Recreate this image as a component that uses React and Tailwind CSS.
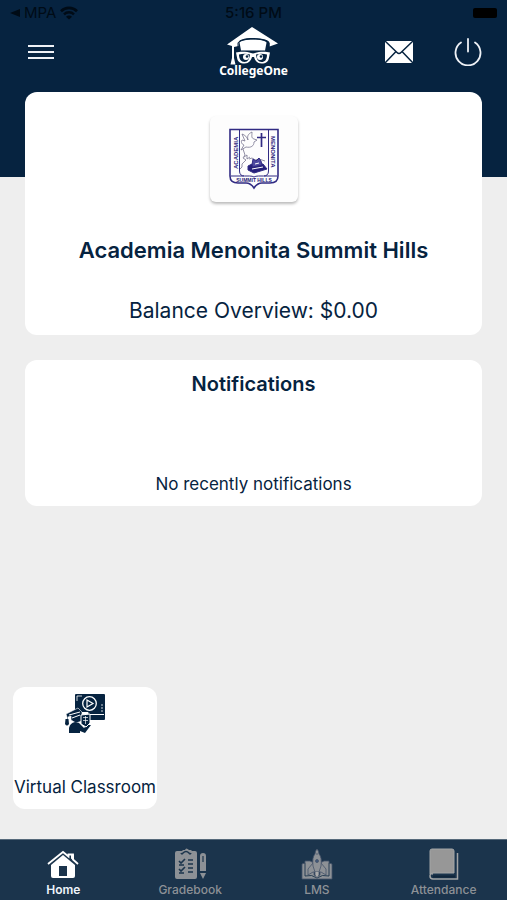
import React from "react";

const tabs = [
  { label: "Home", icon: HomeIcon, active: true },
  { label: "Gradebook", icon: GradebookIcon },
  { label: "LMS", icon: LmsIcon },
  { label: "Attendance", icon: BookIcon },
];

function WifiIcon() {
  return (
    <svg width="18" height="14" viewBox="0 0 18 14" fill="none" stroke="#000b16">
      <path d="M1 5.2a11.4 11.4 0 0 1 16 0" strokeWidth="2.6" />
      <path d="M4 8.3a7.2 7.2 0 0 1 10 0" strokeWidth="2.4" />
      <path d="M9 13.6 6 10.7a4.2 4.2 0 0 1 6 0z" fill="#000b16" stroke="none" />
    </svg>
  );
}

function MenuIcon() {
  return (
    <svg width="28" height="16" viewBox="0 0 28 16" stroke="#eef1f6" strokeWidth="2">
      <path d="M1 2h26M1 8h26M1 14h26" />
    </svg>
  );
}

function CapLogo() {
  return (
    <svg width="54" height="38" viewBox="0 0 54 38">
      <path d="M26 0 52 16.5 43.5 19.5V16c0-3-7-5-16.500-5S12.500 13 12.500 16v3L8 20v11h-2V19L1 17.500z" fill="#fff" />
      <path d="M13.500 15.500c3-4 24-4 27 0l-1.500 8h-24z" fill="#fff" />
      <path d="M12 21.500v-5.500c2-5.500 28-5.500 31 0v4" fill="none" stroke="#062340" strokeWidth="1" />
      <path d="M15.500 24.500h23" stroke="#062340" strokeWidth="1.200" />
      <path d="M6 19h2v12l1.500 6.500h-5L6 31z" fill="#fff" />
      <path d="M10 25.500c4-1 11-1 15 .5 1 .5 3 .5 4 0 4-1.500 11-1.500 15-.5l-1 5c-.5 4-3 6-7.500 6s-6.500-3-7.500-6.500h-2c-1 3.500-3 6.500-7.500 6.500s-7-2-7.500-6z" fill="#fff" />
      <path d="M13 27.500c3.500-1 8-1 11 0-.5 4-2 7.500-5.500 7.500S13 32 13 27.500zM30 27.500c3-1 7.500-1 11 0 0 5-2 7.500-5.500 7.500S30.500 32 30 27.500z" fill="#062340" />
      <circle cx="20" cy="30" r="3" fill="#fff" />
      <circle cx="34" cy="30" r="3" fill="#fff" />
      <circle cx="21" cy="29.500" r="1.300" fill="#062340" />
      <circle cx="35" cy="29.500" r="1.300" fill="#062340" />
    </svg>
  );
}

function MailIcon() {
  return (
    <svg width="30" height="24" viewBox="0 0 30 24">
      <rect x="1" y="1" width="28" height="22" rx="1" fill="#fff" />
      <path d="m1 1 12 11.500c1.200 1.200 2.800 1.200 4 0L29 1M1 23l11-11.500M29 23 18 11.500" fill="none" stroke="#062340" strokeWidth="1.500" />
    </svg>
  );
}

function PowerIcon() {
  return (
    <svg width="28" height="28" viewBox="0 0 28 28" fill="none" stroke="#eef1f6" strokeWidth="1.800" strokeLinecap="round">
      <path d="M14 1v12.500M7 4.500a12.500 12.500 0 1 0 14 0" />
    </svg>
  );
}

function SchoolCrest() {
  return (
    <svg width="50" height="62" viewBox="0 0 50 62" fill="none" stroke="#312b83" role="img" aria-label="Academia Menonita Summit Hills">
      <path d="M1 1.500h48V48c0 5-3 7-8 7h-8c-4 0-6 2-8 5-2-3-4-5-8-5H9c-5 0-8-2-8-7z" strokeWidth="1.600" />
      <path d="M10.500 1.500V43q0 5 5 5h5q3 0 4.500 1 1.500-1 4.500-1h5q5 0 5-5V1.500M2 48h13M35 48h13" strokeWidth="1" />
      <path d="M13 6c3 1 5 3 6 6-1-4 0-6 4-8 0 4-1 6 2 7l3 1-3 2c0 4-3 6-8 5l-5 3 3-5c-3-1-3-4-2-5l3 1zM14 21l2 6-2 3 3 2-4 4v3l-2 2M15 29l3-2v4l3-2M20 31l3-1 3 2 4-1 6 2" stroke="#77758f" strokeWidth=".8" />
      <path d="M32.500 5v14M28 9.500h9" strokeWidth="1.700" />
      <path d="m19 38 4-2h11l4 5-13 4-6-3z" fill="#26207a" />
      <path d="m23 37 1-6 3 2 3-3 2 3 1 4-9 2z" fill="#4e49a0" />
      <path d="m23 41 11-2M26 36l4-1" stroke="#fff" />
      <g fill="#26207a" stroke="none" fontFamily="Liberation Sans, sans-serif" fontWeight="700">
        <text x="8.500" y="41" fontSize="6" transform="rotate(-90 8.500 41)">ACADEMIA</text>
        <text x="42" y="8" fontSize="6" transform="rotate(90 42 8)">MENONITA</text>
        <text x="25" y="54" fontSize="5" textAnchor="middle">SUMMIT HILLS</text>
      </g>
    </svg>
  );
}

function ClassroomIcon() {
  return (
    <svg width="42" height="42" viewBox="0 0 42 42" fill="#062340">
      <rect x="11" y="1" width="30" height="18" rx="1" />
      <path d="M24 18h17v8q0 1-1 1H26z" />
      <path d="M25 21.500h15" stroke="#fff" strokeWidth="1" />
      <circle cx="25.500" cy="10.500" r="6.800" fill="none" stroke="#fff" strokeWidth="1.300" />
      <path d="m23 7 6 3.500-6 3.500z" fill="none" stroke="#fff" strokeWidth="1.200" />
      <path d="M13 8V3h5M37 12h2M37 15h2M37 18h2" fill="none" stroke="#fff" strokeWidth=".8" />
      <path d="M2 21 14 15l4 4v9l-6 2-5-3v-4l-3 1v4H3v-4z" stroke="#fff" strokeWidth=".6" />
      <path d="m5 22 11-3M8 25l8-3" stroke="#fff" strokeWidth="1" />
      <path d="M1.500 26h3l.5 5q-2 3-4 0zM5 40V35q1-5 6-6l4 1 5 5 3-3h4l-6 8-5-2v2z" />
      <path d="m17 22 9-1v9l-4 4-5-3z" stroke="#fff" />
      <path d="M19 24.500h5M19 27.500h5M21.500 23v8" stroke="#fff" strokeWidth=".7" />
    </svg>
  );
}

function HomeIcon() {
  return (
    <svg width="32" height="32" viewBox="0 0 32 32" fill="#fff">
      <path d="m1 16 15-12 5.500 4.500V6.500H26V11.500l5 4.500" fill="none" stroke="#fff" strokeWidth="1.800" />
      <path d="M24 6.500h3V13l-3-2.500z" />
      <path d="M16 7 28 17v11q0 2-2 2H6q-2 0-2-2V17z" />
      <path d="M12 18h8v10h-8z" fill="#1b344c" />
    </svg>
  );
}

function GradebookIcon() {
  return (
    <svg width="32" height="32" viewBox="0 0 32 32" fill="#8d9196">
      <path d="M3 3h5l1-1h2q1-3 4 0h2l1 1h3q2 0 2 2v24q0 2-2 2H3q-2 0-2-2V5q0-2 2-2z" />
      <path d="M7 5q1 2 2 0 3-3 6 0 1 2 2 0M5 13l2 2 4-4M5 21l2 2 4-4M14 12h5M14 16h5M14 20h5M14 24h5M5 17h5M5 25h5" fill="none" stroke="#1b344c" strokeWidth="1.600" />
      <path d="M26 23V8q0-3 3-3t3 3v15zM26 25h6l-3 6z" />
      <path d="M29 8v6" stroke="#1b344c" strokeWidth="1.200" />
    </svg>
  );
}

function LmsIcon() {
  return (
    <svg width="32" height="32" viewBox="0 0 32 32" fill="#8d9196" stroke="#45536a" strokeWidth=".8">
      <path d="M1 16l3-1v-2h5l4 2v12q3 2 6 0V15l4-2h5v2l3 1v15H1z" />
      <path d="M4 15v13q7-2 12 2 5-4 12-2V15" fill="none" stroke="#1b344c" strokeWidth=".9" />
      <path d="m12 15-5 6v6l5-3h8l5 3v-6l-5-6z" />
      <path d="M16 1q-2 2-2 5-3 3-2 12l2 6h4l2-6q1-9-2-12 0-3-2-5z" />
      <circle cx="16" cy="13" r="1.500" fill="#41597c" />
      <path d="M14 24v3l2 3 2-3v-3M15 6h2" fill="#aaa" />
    </svg>
  );
}

function BookIcon() {
  return (
    <svg width="32" height="32" viewBox="0 0 32 32" fill="none" stroke="#a3a5a6">
      <path d="M4 1h20q2 0 2 2v22H5q-2 0-3 1V3q0-2 2-2z" fill="#979797" strokeWidth="1" />
      <path d="M29.500 5v26H5q-3 0-3-3t3-2" strokeWidth="1.500" />
      <path d="M5 28.500h22" stroke="#11263b" strokeWidth="2" />
    </svg>
  );
}

export default function App() {
  return (
    <div className="flex min-h-screen flex-col bg-[#eeeeee] font-['Inter','Liberation_Sans',sans-serif] text-[#062340]">
      <header className="bg-[#062340] pb-[97px]">
        <div className="grid h-6 grid-cols-3 items-center px-2.5 pt-0.5 text-[15px] text-[#000b16]">
          <div className="flex items-center gap-1">
            <svg width="10" height="8" viewBox="0 0 10 8" fill="#000b16">
              <path d="m0 4 10-4v8z" />
            </svg>
            <span>MPA</span>
            <WifiIcon />
          </div>
          <span className="text-center font-medium">5:16 PM</span>
          <span className="h-2.5 w-6 justify-self-end rounded-xs bg-black" />
        </div>

        <div className="grid h-14 grid-cols-3 items-center px-[25px]">
          <button aria-label="Menu" className="ml-0.5 justify-self-start">
            <MenuIcon />
          </button>
          <div className="flex flex-col items-center">
            <CapLogo />
            <span className="font-['Noto_Sans',sans-serif] text-xs leading-3 font-bold text-white">
              CollegeOne
            </span>
          </div>
          <div className="flex items-center gap-10 justify-self-end">
            <button aria-label="Messages">
              <MailIcon />
            </button>
            <button aria-label="Log out">
              <PowerIcon />
            </button>
          </div>
        </div>
      </header>

      <main className="-mt-[85px] flex flex-1 flex-col">
        <div className="flex flex-col gap-[25px] px-[25px]">
          <section className="flex flex-col items-center rounded-xl bg-white px-4 pt-6 pb-2">
            <div className="flex h-[86px] w-[88px] items-center justify-center rounded-md bg-[#fdfdfd] shadow-[0_2px_3px_#bbbbbb]">
              <SchoolCrest />
            </div>
            <h1 className="mt-8 text-center text-[22px] leading-8 font-semibold">
              Academia Menonita Summit Hills
            </h1>
            <p className="mt-[29px] text-[21px] leading-8">Balance Overview: $0.00</p>
          </section>

          <section className="flex flex-col items-center rounded-xl bg-white px-4 pt-2 pb-2.5">
            <h2 className="text-xl leading-8 font-semibold">Notifications</h2>
            <p className="mt-[72px] text-[17px] leading-6">No recently notifications</p>
          </section>
        </div>

        <div className="mt-auto px-[13px] pb-[30px]">
          <button className="flex w-36 flex-col items-center rounded-xl bg-white pt-1.5 pb-2.5">
            <ClassroomIcon />
            <span className="mt-10 text-[17px] leading-6 whitespace-nowrap">Virtual Classroom</span>
          </button>
        </div>
      </main>

      <nav className="grid grid-cols-4 border-t border-[#55697a] bg-[#1b344c] pt-2">
        {tabs.map(({ label, icon: Icon, active }) => (
          <a
            key={label}
            href="#"
            aria-current={active ? "page" : undefined}
            className={`flex flex-col items-center text-xs leading-5 ${
              active ? "font-semibold text-[#eef4fb]" : "font-medium text-[#8d9196]"
            }`}
          >
            <Icon />
            {label}
          </a>
        ))}
      </nav>
    </div>
  );
}
